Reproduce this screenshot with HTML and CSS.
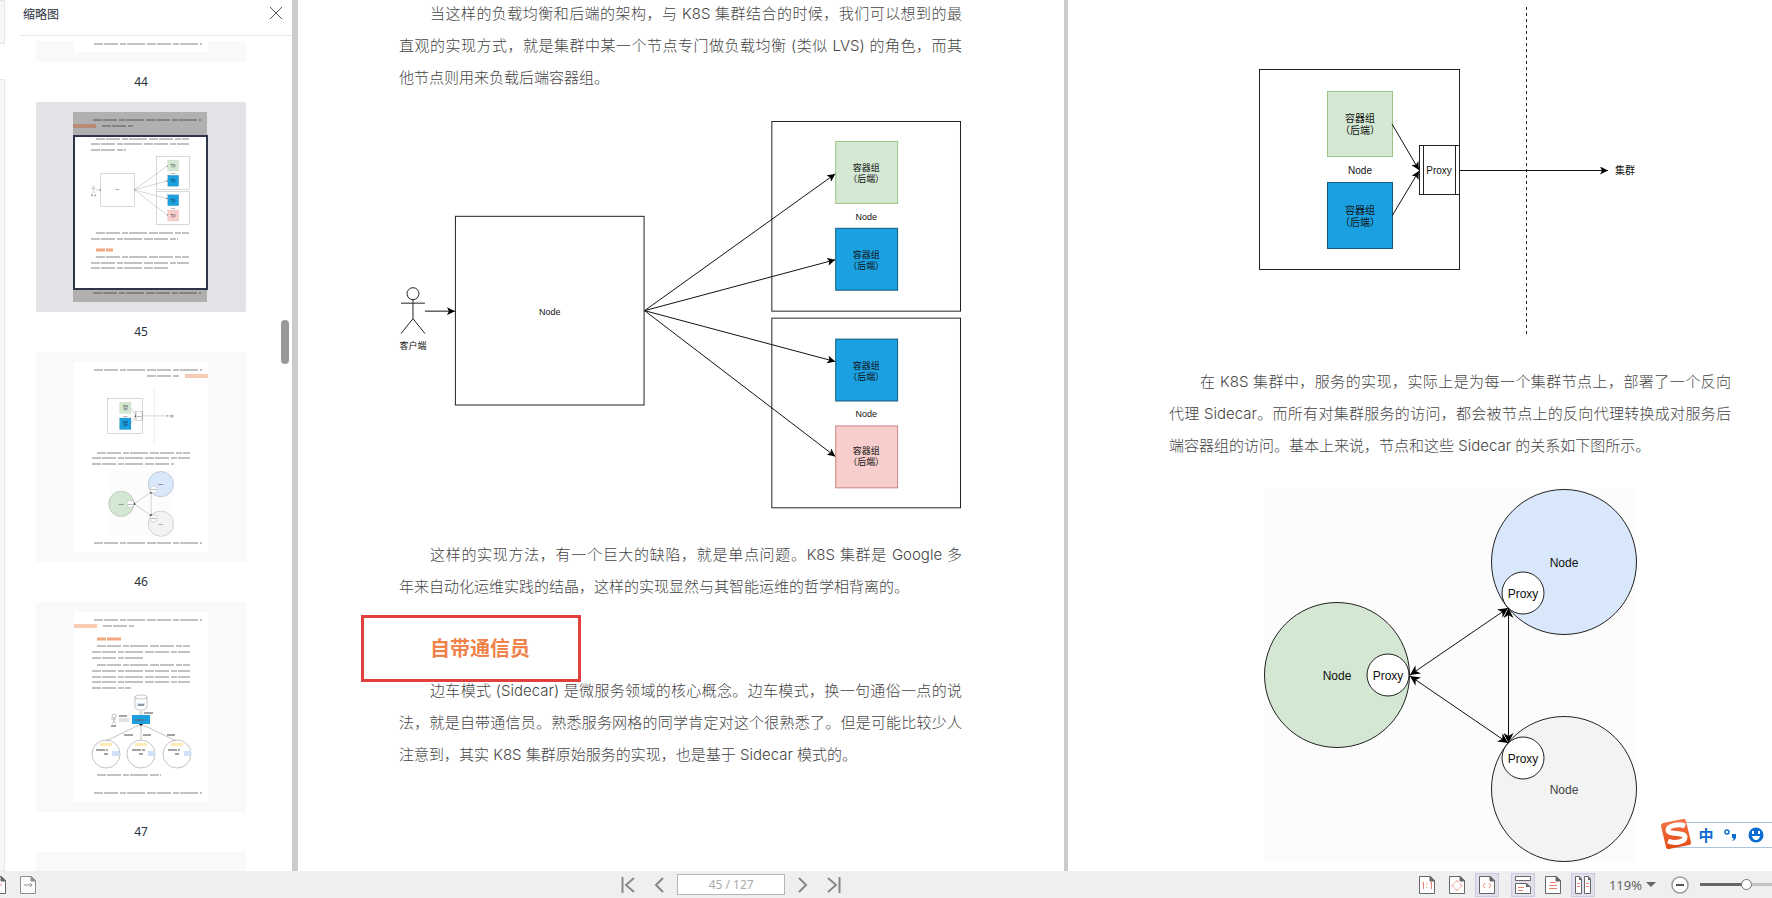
FILE: index.html
```html
<!DOCTYPE html>
<html lang="zh-CN">
<head>
<meta charset="utf-8">
<title>PDF 阅读器</title>
<link rel="stylesheet" href="styles.css">
</head>
<body>
<svg class="defs" aria-hidden="true">
  <defs>
    <marker id="tip" viewBox="0 0 8 8" refX="8" refY="4" markerWidth="8" markerHeight="8" orient="auto-start-reverse" markerUnits="userSpaceOnUse"><path d="M0 0L8 4L0 8L2 4z"/></marker>
    <marker id="tip-lg" viewBox="0 0 10 10" refX="10" refY="5" markerWidth="10" markerHeight="10" orient="auto-start-reverse" markerUnits="userSpaceOnUse"><path d="M0 0L10 5L0 10L3 5z"/></marker>
  </defs>
  <symbol id="sheet" viewBox="0 0 16 18"><path d="M.500 .500H11.500L15.500 4.500V17.500H.500z" fill="#fff" stroke="#666"/><path d="M11 .500V5H15.500z" fill="#666" stroke="#666"/></symbol>
</svg>

<div class="app">
  <main class="workspace">
    <div class="edge"><i class="edge-top"></i><i class="edge-rest"></i></div>
    <aside class="sidebar">
      <header class="side-head">
        <h2>缩略图</h2>
        <button class="close" aria-label="关闭"><svg width="12" height="12" viewBox="0 0 12 12"><path d="M0 0L12 12M12 0L0 12"/></svg></button>
      </header>
      <div class="thumbs">
        <a class="thumb" href="#p44">
          <span class="card card-cut"><svg width="134" height="11" viewBox="74 41 134 11"><rect class="paper" x="74" y="41" width="134" height="11"/><path class="greek" d="M94 44H202"/></svg></span>
          <span class="num">44</span>
        </a>
        <a class="thumb" href="#p45">
          <span class="card current"><svg width="136" height="190" viewBox="74 113 136 190">
            <rect class="paper" x="74" y="113" width="134" height="190"/>
            <svg x="92" y="157" width="99" height="69" viewBox="399 120 564 390"><use href="#fanout"/></svg>
            <path class="greek" d="M97 140H190M92 145H190M92 151H127M97 234H190M92 240H179M97 258H190M92 264H190M92 269H171"/>
            <path class="greek hot" d="M97 251H114"/>
            <path class="shade" d="M74 113H208V136H74zM74 291H208V303H74z"/>
            <path class="tab-dark" d="M74 125H97V129H74z"/>
            <path class="greek dark" d="M94 121H202M103 127H134M94 294H202"/>
            <rect class="frame" x="75" y="137" width="133" height="153"/>
          </svg></span>
          <span class="num">45</span>
        </a>
        <a class="thumb" href="#p46">
          <span class="card"><svg width="134" height="190" viewBox="74 363 134 190">
            <rect class="paper" x="74" y="363" width="134" height="190"/>
            <path class="greek" d="M94 371H202M147 377H179M97 454H190M92 459H190M92 465H174M94 544H202"/>
            <path class="tab" d="M185 375H208V379H185z"/>
            <svg x="92" y="388" width="98" height="58" viewBox="1169 6 562 330"><use href="#proxy"/></svg>
            <svg x="92" y="472" width="98" height="66" viewBox="1169 487 562 378"><use href="#mesh"/></svg>
          </svg></span>
          <span class="num">46</span>
        </a>
        <a class="thumb" href="#p47">
          <span class="card"><svg width="134" height="190" viewBox="74 613 134 190">
            <rect class="paper" x="74" y="613" width="134" height="190"/>
            <path class="tab" d="M74 625H97V629H74z"/>
            <path class="greek" d="M94 621H202M103 627H134M97 647H190M92 653H190M92 659H145M97 666H190M92 672H190M92 678H190M92 683H190M92 689H131M97 776H161M94 794H202"/>
            <path class="greek hot" d="M97 640H121"/>
            <g class="mini">
              <path d="M135 698V708C135 712 147 712 147 708V698"/><ellipse cx="141" cy="698" rx="6" ry="2"/>
              <path d="M140 712V716M142 712V716M119 720H129M119 722H129"/>
              <circle cx="114" cy="717" r="2"/><path d="M114 719V722L112 725M114 722L116 725M111 720H116"/>
              <path d="M141 725L106 742M141 725V741M141 725L176 742"/>
              <circle cx="106" cy="755" r="14"/><circle cx="141" cy="755" r="14"/><circle cx="177" cy="755" r="14"/>
            </g>
            <path d="M132 716H150V725H132z" fill="#1ba1e2"/>
            <path d="M139 725H143L141 727z"/>
            <path d="M137 704H145V707H137zM112 752H119V757H112zM148 752H155V757H148zM184 752H191V757H184z" fill="#cfe0f8"/>
            <path d="M100 744H112V747H100zM135 744H147V747H135zM171 744H183V747H171z" fill="#fdebb3"/>
            <path class="greek dark" d="M144 714H153M119 717H127M124 736H133M143 736H151M167 736H175M96 751H108M132 751H145M168 751H180M104 755H108M139 755H143M175 755H179M138 706H144M135 721H146M111 727H116"/>
          </svg></span>
          <span class="num">47</span>
        </a>
        <a class="thumb" href="#p48" aria-label="48"><span class="card"></span></a>
      </div>
      <i class="scroll-thumb"></i>
    </aside>

    <article class="page page-left">
      <p class="first"><span class="line full indent">当这样的负载均衡和后端的架构，与 K8S 集群结合的时候，我们可以想到的最</span><span class="line full">直观的实现方式，就是集群中某一个节点专门做负载均衡 (类似 LVS) 的角色，而其</span><span class="line">他节点则用来负载后端容器组。</span></p>
      <svg class="figure fig-fanout" viewBox="399 120 564 390">
        <g id="fanout">
          <g class="shape">
            <rect x="772.500" y="121.500" width="189" height="190"/>
            <rect x="772.500" y="318.500" width="189" height="190"/>
            <rect x="455.500" y="216.500" width="189" height="189"/>
            <rect class="green" x="836.500" y="141.500" width="62" height="62"/>
            <rect class="blue" x="836.500" y="228.500" width="62" height="62"/>
            <rect class="blue" x="836.500" y="339.500" width="62" height="62"/>
            <rect class="pink" x="836.500" y="426.500" width="62" height="62"/>
            <circle cx="413" cy="294" r="6"/>
            <path d="M413 300V319M401 303.500H425M401 334L413 319L425 334"/>
          </g>
          <g class="arrow">
            <path d="M425 311.500H455"/>
            <path d="M645 311L836 174"/><path d="M645 311L836 260"/>
            <path d="M645 311L836 362"/><path d="M645 311L836 457"/>
          </g>
          <g class="label s9">
            <text x="550" y="315">Node</text><text x="867" y="220">Node</text><text x="867" y="418">Node</text>
            <text x="413" y="349">客户端</text>
            <text x="867" y="171">容器组</text><text x="867" y="182">（后端）</text>
            <text x="867" y="258">容器组</text><text x="867" y="269">（后端）</text>
            <text x="867" y="369">容器组</text><text x="867" y="380">（后端）</text>
            <text x="867" y="455">容器组</text><text x="867" y="466">（后端）</text>
          </g>
        </g>
      </svg>
      <p><span class="line full indent">这样的实现方法，有一个巨大的缺陷，就是单点问题。K8S 集群是 Google 多</span><span class="line">年来自动化运维实践的结晶，这样的实现显然与其智能运维的哲学相背离的。</span></p>
      <h1>自带通信员<i class="callout"></i></h1>
      <p><span class="line full indent">边车模式 (Sidecar) 是微服务领域的核心概念。边车模式，换一句通俗一点的说</span><span class="line full">法，就是自带通信员。熟悉服务网格的同学肯定对这个很熟悉了。但是可能比较少人</span><span class="line">注意到，其实 K8S 集群原始服务的实现，也是基于 Sidecar 模式的。</span></p>
    </article>

    <article class="page page-right">
      <svg class="figure fig-proxy" viewBox="1169 6 562 330">
        <g id="proxy">
          <g class="shape">
            <rect x="1259.500" y="69.500" width="200" height="200"/>
            <rect class="green" x="1327.500" y="91.500" width="65" height="65"/>
            <rect class="blue" x="1327.500" y="182.500" width="65" height="66"/>
            <rect x="1419.500" y="145.500" width="40" height="49"/>
            <path d="M1423.500 145V194M1455.500 145V194"/>
            <path class="dashed" d="M1526.500 7V335"/>
          </g>
          <g class="arrow">
            <path d="M1460 170.500H1608"/><path d="M1392 124L1419 170"/><path d="M1392 216L1419 171"/>
          </g>
          <g class="label s10">
            <text x="1360" y="122">容器组</text><text x="1360" y="134">（后端）</text>
            <text x="1360" y="214">容器组</text><text x="1360" y="226">（后端）</text>
            <text x="1360" y="174">Node</text><text x="1439" y="174">Proxy</text><text x="1625" y="174">集群</text>
          </g>
        </g>
      </svg>
      <p><span class="line full indent">在 K8S 集群中，服务的实现，实际上是为每一个集群节点上，部署了一个反向</span><span class="line full">代理 Sidecar。而所有对集群服务的访问，都会被节点上的反向代理转换成对服务后</span><span class="line">端容器组的访问。基本上来说，节点和这些 Sidecar 的关系如下图所示。</span></p>
      <svg class="figure fig-mesh" viewBox="1169 487 562 378">
        <g id="mesh">
          <rect class="haze" x="1264" y="488" width="371" height="374"/>
          <g class="shape">
            <circle class="leaf" cx="1337" cy="675" r="72.500"/>
            <circle class="sky" cx="1564" cy="562" r="72.500"/>
            <circle class="gray" cx="1564" cy="789" r="72.500"/>
            <circle cx="1388" cy="675" r="21"/><circle cx="1523" cy="593" r="21"/><circle cx="1523" cy="758" r="21"/>
          </g>
          <g class="mesh-arrow">
            <path d="M1410 675L1508 608"/><path d="M1410 676L1508 743"/><path d="M1508.500 608V743"/>
          </g>
          <g class="label s12">
            <text x="1337" y="680">Node</text><text x="1564" y="567">Node</text><text class="dim" x="1564" y="794">Node</text>
            <text x="1388" y="680">Proxy</text><text x="1523" y="598">Proxy</text><text x="1523" y="763">Proxy</text>
          </g>
        </g>
      </svg>
    </article>

    <div class="ime">
      <svg class="ime-logo" width="32" height="32" viewBox="0 0 32 32"><defs><linearGradient id="flame" x1="0" y1="0" x2="0" y2="1"><stop offset="0" stop-color="#f4764a"/><stop offset="1" stop-color="#e5480f"/></linearGradient></defs><path d="M3 5L23 1Q25 0 26 3L31 24Q31 27 29 27L9 31Q6 31 6 29L1 8Q1 6 3 5z" fill="url(#flame)"/><path d="M25 8C18 5 8 8 8 12C8 17 25 14 25 19C25 24 15 26 8 23" fill="none" stroke="#fff" stroke-width="5"/></svg>
      <button class="ime-btn">中</button>
      <button class="ime-btn" aria-label="标点"><svg width="12" height="12" viewBox="0 0 12 12"><circle cx="3" cy="3" r="2" fill="none" stroke="#0a6cd0" stroke-width="1.500"/><path d="M8 5H12V8Q12 11 8 12Q10 10 9.500 9H8z" fill="#0a6cd0"/></svg></button>
      <button class="ime-btn" aria-label="表情"><svg width="16" height="16" viewBox="0 0 16 16"><circle cx="8" cy="8" r="7.500" fill="#0a6cd0"/><path d="M4 4H6V7H4zM10 4H12V7H10zM4 9H12Q11 13 8 13Q5 13 4 9z" fill="#fff"/></svg></button>
    </div>
  </main>

  <footer class="bar">
    <div class="history">
      <button class="tool" aria-label="后退"><svg width="16" height="18"><use href="#sheet"/><path class="red" d="M4 9H12"/></svg></button>
      <button class="tool" aria-label="前进"><svg class="off" width="16" height="18"><use href="#sheet"/><path d="M4 9H12M10 7L12 9L10 11" fill="none" stroke="#777"/></svg></button>
    </div>
    <nav class="pager">
      <button aria-label="首页"><svg width="14" height="16" viewBox="0 0 14 16"><path d="M1.500 0V16M13 1L5 8L13 15"/></svg></button>
      <button aria-label="上一页"><svg width="10" height="16" viewBox="0 0 10 16"><path d="M9 1L2 8L9 15"/></svg></button>
      <input class="page-no" type="text" aria-label="页码" value="45 / 127">
      <button aria-label="下一页"><svg width="10" height="16" viewBox="0 0 10 16"><path d="M1 1L8 8L1 15"/></svg></button>
      <button aria-label="末页"><svg width="14" height="16" viewBox="0 0 14 16"><path d="M12.500 0V16M1 1L9 8L1 15"/></svg></button>
    </nav>
    <div class="view">
      <button class="tool" aria-label="实际大小"><svg width="16" height="18"><use href="#sheet"/><path class="red" d="M3.500 7L4.500 6V13M8 7.500V8.500M8 11V12M11.500 7L12.500 6V13"/></svg></button>
      <button class="tool" aria-label="适合页面"><svg width="16" height="18"><use href="#sheet"/><path class="red" d="M6 6.500L8 4.500L10 6.500M6 12.500L8 14.500L10 12.500M5 7.500L3 9.500L5 11.500M11 7.500L13 9.500L11 11.500"/></svg></button>
      <button class="tool on" aria-label="适合宽度"><svg width="16" height="18"><use href="#sheet"/><path class="red" d="M6 7L4 9.500L6 12M10 7L12 9.500L10 12"/></svg></button>
      <button class="tool on gap" aria-label="连续"><svg width="16" height="18" viewBox="0 0 16 18"><path d="M.500 .500H15.500V4.500H.500zM.500 7.500H11.500L15.500 11V17.500H.500z" fill="#fff" stroke="#666"/><path d="M11 7V11H15.500z" fill="#666"/><path class="red" d="M3 11.500H9M3 14.500H8"/></svg></button>
      <button class="tool" aria-label="单页"><svg width="16" height="18"><use href="#sheet"/><path class="red" d="M5 6.500H11M4 9.500H12M4 12.500H12"/></svg></button>
      <button class="tool on" aria-label="双页"><svg width="16" height="18" viewBox="0 0 16 18"><path d="M.500 .500H4.500L6.500 3V17.500H.500zM9.500 .500H13.500L15.500 3V17.500H9.500z" fill="#fff" stroke="#666"/><path d="M4 0V4H7zM13 0V4H16z" fill="#666"/><path class="red" d="M2 7.500H5M2 10.500H5M11 7.500H14M11 10.500H14"/></svg></button>
      <button class="zoom">119%<svg width="10" height="5" viewBox="0 0 10 5"><path d="M0 0H10L5 5z" fill="#666"/></svg></button>
      <button class="minus" aria-label="缩小"><svg width="18" height="18" viewBox="0 0 18 18"><circle cx="9" cy="9" r="8" fill="#fff" stroke="#999" stroke-width="1.500"/><path d="M5 9H13" stroke="#555" stroke-width="2"/></svg></button>
      <input class="slider" type="range" aria-label="缩放" value="50">
    </div>
  </footer>
</div>
</body>
</html>
```
FILE: styles.css
```css
* { box-sizing: border-box; }
body { margin: 0; background: #fff; font-family: "Noto Sans", "Noto Sans CJK SC", sans-serif; color: #2b3040; }
button { border: 0; padding: 0; background: none; font: inherit; color: inherit; display: flex; align-items: center; justify-content: center; }
h1, h2, p { margin: 0; }
.defs { position: absolute; width: 0; height: 0; }
.app { height: 100vh; display: flex; flex-direction: column; overflow: hidden; }
.workspace { flex: 1; min-height: 0; display: flex; overflow: hidden; position: relative; }

.edge { flex: 0 0 5px; display: flex; flex-direction: column; justify-content: space-between; gap: 35px; }
.edge i { background: #f7f7f7; border: 1px solid #e6e6e6; border-left: 0; }
.edge-top { height: 44px; border-top: 0; }
.edge-rest { flex: 1; }

.sidebar { flex: 0 0 287px; position: relative; display: flex; flex-direction: column; overflow: hidden; }
.side-head { flex: 0 0 36px; margin-left: 15px; padding: 0 10px 6px 3px; display: flex; align-items: center; justify-content: space-between; border-bottom: 1px solid #e4e6e8; }
.side-head h2 { font-size: 12px; font-weight: 400; line-height: 18px; }
.close svg { display: block; margin-top: -4px; }
.close path { stroke: #555; fill: none; }
.thumbs { padding: 5px 0 0 31px; flex: 1; min-height: 0; overflow: hidden; }
.thumb { display: flex; flex-direction: column; align-items: center; width: 210px; color: inherit; text-decoration: none; }
.card { width: 210px; height: 210px; display: flex; align-items: center; justify-content: center; background: #f7f9fb; border-radius: 2px; }
.card.current { background: #e2e3e7; }
.card-cut { height: 21px; align-items: flex-start; }
.num { font-size: 12px; line-height: 40px; }
.scroll-thumb { position: absolute; right: 3px; top: 320px; width: 8px; height: 44px; border-radius: 4px; background: #999; }

.paper { fill: #fff; }
.greek { stroke: #999; stroke-width: 2; stroke-dasharray: 9 1 14 2 6 1 18 2; fill: none; opacity: .6; }
.greek.dark { stroke: #666; }
.greek.hot { stroke: #f0905f; stroke-width: 3; opacity: .8; }
.shade { fill: #b0b0b0; }
.tab { fill: #f8cbb3; }
.tab-dark { fill: #b98a74; }
.frame { fill: none; stroke: #2f3448; stroke-width: 2; }
.mini { fill: none; stroke: #888; stroke-width: .5; }

.page { background: #fff; border-left: 4px solid #ccc; min-width: 0; }
.page-left { flex: 1 1 772px; border-left-width: 6px; padding: 0 102px 0 101px; }
.page-right { flex: 1 1 708px; padding: 6px 41px 0 101px; }
.page p { font-family: Inter, "Noto Sans CJK SC", sans-serif; font-size: 15px; font-weight: 300; line-height: 32px; color: #444; }
.line { display: block; white-space: nowrap; }
.full { text-align-last: justify; }
.indent { padding-left: 31px; }
.first { margin-top: -2px; }
.figure { display: block; width: 100%; height: auto; }
.fig-fanout { margin: 26px 0 30px; }
.fig-proxy { margin-bottom: 30px; }
.fig-mesh { margin-top: 25px; }
h1 { position: relative; margin: 29px 0 11px; padding-left: 31px; font-family: "Noto Sans CJK SC", sans-serif; font-size: 20px; font-weight: 700; line-height: 32px; color: #f0824a; }
.callout { position: absolute; left: -38px; top: -17px; width: 220px; height: 67px; border: 3px solid #e23f3f; }

.shape { fill: none; stroke: #222; stroke-width: 1; }
.shape circle { fill: #fff; }
.shape .green { fill: #d5e8d4; stroke: #9cc383; }
.shape .blue { fill: #1ba1e2; stroke: #135a7d; }
.shape .pink { fill: #f8cecc; stroke: #c98482; }
.shape .leaf { fill: #d3e7d2; }
.shape .sky { fill: #d8e7f9; }
.shape .gray { fill: #f3f3f3; }
.dashed { stroke-dasharray: 3 3; }
.haze { fill: #fcfcfc; }
.arrow path { fill: none; stroke: #111; marker-end: url(#tip); }
.mesh-arrow path { fill: none; stroke: #111; marker-start: url(#tip-lg); marker-end: url(#tip-lg); }
.label { font-family: "Liberation Sans", "Noto Sans CJK SC", sans-serif; text-anchor: middle; fill: #111; }
.s9 { font-size: 9px; }
.s10 { font-size: 10px; }
.s12 { font-size: 12px; }
.dim { fill: #444; }

.ime { position: absolute; right: 0; bottom: 23px; height: 26px; width: 96px; padding-left: 12px; display: flex; align-items: center; gap: 10px; background: #fff; border: 1px solid #a9c6de; border-width: 1px 0; }
.ime-logo { position: absolute; left: -16px; top: -5px; }
.ime-btn { width: 16px; height: 24px; margin-left: 0; color: #0a6cd0; font-family: "Noto Sans CJK SC", sans-serif; font-size: 15px; font-weight: 700; line-height: 24px; }
.ime-btn:first-of-type { margin-left: 10px; margin-right: -2px; }

.bar { flex: 0 0 27px; display: flex; align-items: center; background: #efefef; overflow: hidden; }
.history { flex: 0 0 35%; display: flex; gap: 6px; margin-left: -14px; }
.tool { flex: 0 0 24px; height: 24px; border: 1px solid transparent; }
.tool svg { display: block; }
.tool.on { background: #dfe0ec; border-color: #c9cbe0; }
.off { opacity: .7; }
.red { fill: none; stroke: #ee8072; }
.pager { display: flex; align-items: center; margin-left: 15px; }
.pager button { flex: none; }
.pager svg { display: block; fill: none; stroke: #888; stroke-width: 2; }
.pager button + button { margin-left: 19px; }
.page-no { width: 108px; height: 21px; margin: 0 13px; padding: 0; border: 1px solid #b5b5b5; background: #fff; text-align: center; font: 12px "Noto Sans", sans-serif; color: #aaa; }
.view { flex: none; display: flex; align-items: center; margin-left: auto; margin-right: -20px; }
.view .tool { margin-right: 6px; }
.view .gap { margin-left: 6px; }
.zoom { font-size: 13px; line-height: 24px; color: #666; gap: 4px; margin-left: 8px; }
.minus { margin: 0 11px 0 15px; }
.slider { appearance: none; width: 92px; height: 12px; margin: 0; background: linear-gradient(90deg, #666 50%, #c4c4c4 50%) center / 100% 3px no-repeat; }
.slider::-webkit-slider-thumb { appearance: none; width: 11px; height: 11px; border-radius: 50%; border: 1px solid #777; background: #fff; }
```
